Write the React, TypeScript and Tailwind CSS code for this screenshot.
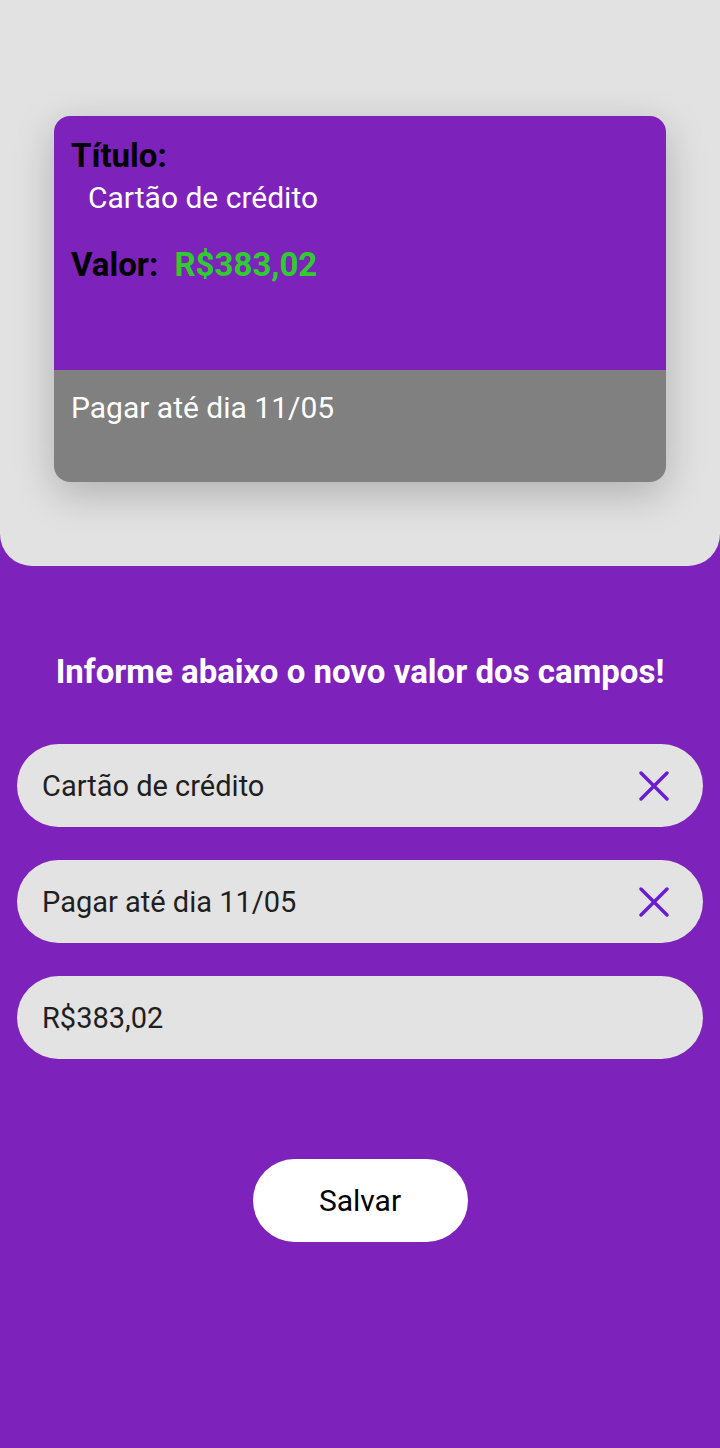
const font = { fontFamily: "Roboto, 'Noto Sans', sans-serif" };

const CloseIcon = () => (
  <svg width="30" height="30" viewBox="0 0 30 30" fill="none">
    <path
      d="M2 2 L28 28 M28 2 L2 28"
      stroke="#6a1bd6"
      strokeWidth="3.4"
      strokeLinecap="round"
    />
  </svg>
);

const Field = ({ value, clear }: { value: string; clear?: boolean }) => (
  <div className="flex items-center justify-between h-[83px] rounded-full bg-[#e3e3e3] pl-[25px] pr-[34px]">
    <span className="text-[29px] leading-[34px] text-[#1f1f1f]">{value}</span>
    {clear && <CloseIcon />}
  </div>
);

export default function App() {
  return (
    <div className="w-[720px] min-h-[1448px] bg-[#7e22bc]" style={font}>
      {/* top summary */}
      <div className="h-[566px] rounded-b-[32px] bg-[#e2e2e2] pt-[116px] px-[54px]">
        <div className="h-[366px] rounded-2xl overflow-hidden flex flex-col shadow-[0_12px_40px_rgba(0,0,0,0.22)]">
          <div className="h-[254px] bg-[#7e22bc] px-[17px] pt-[21px]">
            <p className="text-[33px] leading-[38px] font-bold text-black">Título:</p>
            <p className="mt-[5px] pl-[17px] text-[30px] leading-[36px] text-white">
              Cartão de crédito
            </p>
            <p className="mt-[30px] text-[33px] leading-[38px] font-bold text-black">
              Valor:{" "}
              <span className="ml-[8px] text-[#2ecc2e]">R$383,02</span>
            </p>
          </div>
          <div className="flex-1 bg-[#808080] px-[17px] pt-[20px]">
            <p className="text-[30px] leading-[36px] text-white">Pagar até dia 11/05</p>
          </div>
        </div>
      </div>

      {/* form */}
      <div className="px-[17px]">
        <h2 className="mt-[86px] text-center text-[33px] leading-[40px] font-bold text-white whitespace-nowrap">
          Informe abaixo o novo valor dos campos!
        </h2>
        <div className="mt-[52px] flex flex-col gap-[33px]">
          <Field value="Cartão de crédito" clear />
          <Field value="Pagar até dia 11/05" clear />
          <Field value="R$383,02" />
        </div>
        <div className="mt-[100px] flex justify-center">
          <button className="w-[215px] h-[83px] rounded-full bg-white text-[30px] text-black">
            Salvar
          </button>
        </div>
      </div>
    </div>
  );
}
